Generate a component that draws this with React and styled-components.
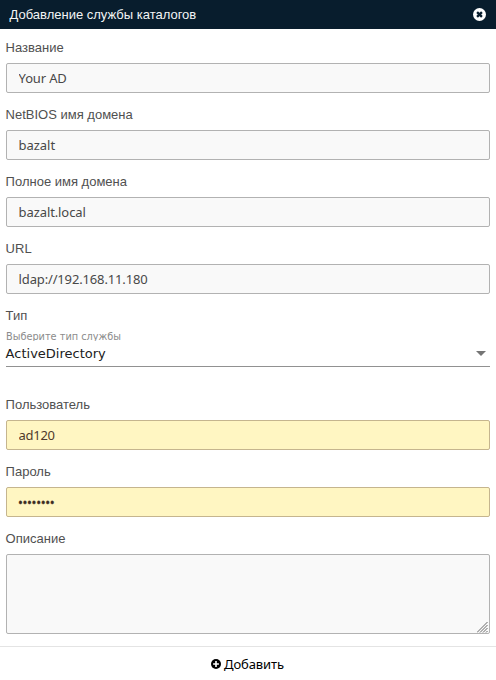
import React from 'react';
import styled, { createGlobalStyle } from 'styled-components';

const GlobalStyle = createGlobalStyle`
  *, *::before, *::after { box-sizing: border-box; }
  body { margin: 0; background: #fff; overflow: hidden; }
`;

const Dialog = styled.div`
  display: flex;
  flex-direction: column;
  width: 496px;
  height: 680px;
  background: #fff;
  font-family: 'Liberation Sans', Arial, sans-serif;
  font-size: 13px;
`;

const Header = styled.header`
  display: flex;
  flex: none;
  align-items: center;
  justify-content: space-between;
  height: 29px;
  padding: 0 10px 0 9.5px;
  background: #081d2d;
  color: #f2f4f5;
`;

const Title = styled.span`
  line-height: 15px;
`;

const CloseButton = styled.button`
  display: flex;
  padding: 0;
  border: 0;
  background: none;
`;

const Form = styled.form`
  display: flex;
  flex: 1;
  flex-direction: column;
  gap: 14px;
  padding: 11px 6px 0;
`;

const Field = styled.div`
  display: flex;
  flex-direction: column;
  gap: 7px;
`;

const Label = styled.label`
  height: 16px;
  margin-left: -0.4px;
  line-height: 16px;
  color: #505050;
  white-space: nowrap;
`;

const Input = styled.input`
  width: 100%;
  height: 30px;
  margin: 0;
  padding: 0 11.6px;
  border: 1px solid ${(p) => (p.$filled ? '#c5b58e' : '#b2b2b2')};
  border-radius: 2px;
  outline: 0;
  background: ${(p) => (p.$filled ? '#fff6c2' : '#f9f9f9')};
  color: ${(p) => (p.$filled ? '#503a2c' : '#484848')};
  font: 13px 'Noto Sans', sans-serif;
  letter-spacing: ${(p) => p.$spacing || 0}px;
`;

const Password = styled(Input)`
  padding-left: 11px;
  font-size: 13px;
  letter-spacing: -0.35px;
  color: #3c2c22;
  -webkit-text-stroke: 0.3px #3c2c22;
`;

const Textarea = styled.div`
  display: flex;
  align-items: flex-end;
  justify-content: flex-end;
  height: 80px;
  padding-right: 1px;
  border: 1px solid #b2b2b2;
  border-radius: 2px;
  background: #f9f9f9;
`;

const Select = styled.div`
  display: flex;
  flex-direction: column;
  height: 36px;
  margin-bottom: 16px;
  border-bottom: 1px solid #919191;
  font-family: 'DejaVu Sans', sans-serif;
`;

const Hint = styled.span`
  flex: none;
  height: 10px;
  overflow: hidden;
  color: #8b8b8b;
  font-size: 9.75px;
  line-height: 12px;
`;

const Choice = styled.div`
  display: flex;
  align-items: center;
  justify-content: space-between;
  height: 25px;
  margin-left: -0.4px;
  padding-right: 4px;
  color: #212121;
  line-height: 25px;
`;

const Footer = styled.footer`
  display: flex;
  flex: none;
  align-items: center;
  justify-content: center;
  height: 34px;
  padding-right: 1px;
  border-top: 1px solid #e4e4e4;
`;

const AddButton = styled.button`
  display: flex;
  align-items: center;
  gap: 3px;
  padding: 0;
  border: 0;
  background: none;
  color: #000;
  font: 13px 'Noto Sans', sans-serif;
  letter-spacing: -0.1px;
`;

const textFields = [
  { label: 'Название', value: 'Your AD', spacing: -0.15 },
  { label: 'NetBIOS имя домена', value: 'bazalt', spacing: -0.05 },
  { label: 'Полное имя домена', value: 'bazalt.local', spacing: -0.1 },
  { label: 'URL', value: 'ldap://192.168.11.180', spacing: -0.15 },
];

function CloseIcon() {
  return (
    <svg width="13" height="13" viewBox="0 0 13 13">
      <circle cx="6.5" cy="6.5" r="6.5" fill="#fff" />
      <path d="M4.1 4.1 8.9 8.9M8.9 4.1 4.1 8.9" stroke="#081d2d" strokeWidth="2.3" />
    </svg>
  );
}

function AddIcon() {
  return (
    <svg width="10" height="10" viewBox="0 0 10 10">
      <circle cx="5" cy="5" r="5" fill="#000" />
      <path d="M5 2.1v5.8M2.1 5h5.8" stroke="#fff" strokeWidth="1.6" />
    </svg>
  );
}

function ResizeGrip() {
  return (
    <svg width="11" height="11" viewBox="0 0 11 11">
      <path d="M0 10.5 10.5 0M3 10.5 10.5 3M6 10.5 10.5 6M9 10.5 10.5 9" stroke="#666" strokeWidth="1" />
    </svg>
  );
}

export default function App() {
  return (
    <Dialog>
      <GlobalStyle />
      <Header>
        <Title>Добавление службы каталогов</Title>
        <CloseButton type="button"><CloseIcon /></CloseButton>
      </Header>
      <Form>
        {textFields.map((f) => (
          <Field key={f.label}>
            <Label>{f.label}</Label>
            <Input defaultValue={f.value} $spacing={f.spacing} />
          </Field>
        ))}
        <Field>
          <Label>Тип</Label>
          <Select>
            <Hint>Выберите тип службы</Hint>
            <Choice>
              ActiveDirectory
              <svg width="10" height="5" viewBox="0 0 10 5"><path d="M0 0h10L5 5z" fill="#757575" /></svg>
            </Choice>
          </Select>
        </Field>
        <Field>
          <Label>Пользователь</Label>
          <Input defaultValue="ad120" $filled $spacing={-0.3} />
        </Field>
        <Field>
          <Label>Пароль</Label>
          <Password type="password" defaultValue="password" $filled />
        </Field>
        <Field>
          <Label>Описание</Label>
          <Textarea><ResizeGrip /></Textarea>
        </Field>
      </Form>
      <Footer>
        <AddButton type="button"><AddIcon />Добавить</AddButton>
      </Footer>
    </Dialog>
  );
}
